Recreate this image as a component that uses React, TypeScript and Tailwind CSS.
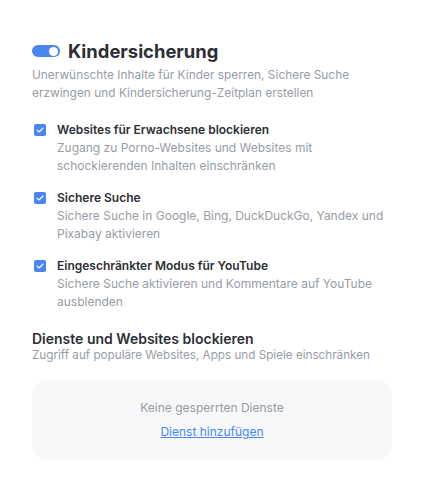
import React from 'react';

// ─── Data ─────────────────────────────────────────────────────
const OPTIONS = [
  {
    title: 'Websites für Erwachsene blockieren',
    text: 'Zugang zu Porno-Websites und Websites mit schockierenden Inhalten einschränken',
  },
  {
    title: 'Sichere Suche',
    text: 'Sichere Suche in Google, Bing, DuckDuckGo, Yandex und Pixabay aktivieren',
  },
  {
    title: 'Eingeschränkter Modus für YouTube',
    text: 'Sichere Suche aktivieren und Kommentare auf YouTube ausblenden',
  },
];

function Checkbox() {
  return (
    <span className="mt-[3px] ml-[2px] flex h-3 w-3 flex-shrink-0 items-center justify-center rounded-[2px] bg-[#4a86f3]">
      <svg width="8" height="6" viewBox="0 0 8 6" fill="none">
        <path d="M1 3.1 3 5 7 1" stroke="#fff" strokeWidth="1.1" strokeLinecap="round" strokeLinejoin="round" />
      </svg>
    </span>
  );
}

export default function App() {
  return (
    <div className="min-h-[493px] w-[426px] bg-white pt-[38px] pl-8 font-['Inter',sans-serif]">
      <div className="w-[360px]">
        {/* Header */}
        <div className="flex h-[26px] items-center gap-2">
          <span className="flex h-3 w-7 items-center justify-end rounded-full bg-[#4a86f3] px-[2px]">
            <span className="h-[9px] w-[9px] rounded-full bg-white" />
          </span>
          <h1 className="text-[18.4px] font-bold leading-[26px] text-[#2c2f35]">Kindersicherung</h1>
        </div>
        <p className="mt-[2px] text-[11.9px] leading-[18px] text-[#979ca5]">
          Unerwünschte Inhalte für Kinder sperren, Sichere Suche erzwingen und Kindersicherung-Zeitplan erstellen
        </p>

        {/* Options */}
        <div className="mt-[19px] flex flex-col gap-[14px]">
          {OPTIONS.map((o) => (
            <div key={o.title} className="flex items-start gap-[11px]">
              <Checkbox />
              <div className="w-[335px]">
                <div className="text-[12px] font-semibold leading-[18px] text-[#2c2f35]">{o.title}</div>
                <div className="text-[12px] leading-[18px] text-[#979ca5]">{o.text}</div>
              </div>
            </div>
          ))}
        </div>

        {/* Blocked services */}
        <h2 className="mt-5 text-[14px] font-semibold leading-[16px] text-[#2c2f35]">
          Dienste und Websites blockieren
        </h2>
        <p className="text-[11.7px] leading-[16px] text-[#979ca5]">
          Zugriff auf populäre Websites, Apps und Spiele einschränken
        </p>
        <div className="mt-[17px] flex flex-col items-center gap-[6px] rounded-2xl bg-[#f6f7f9] pt-[19px] pb-[19px]">
          <span className="text-[12px] leading-[18px] text-[#979ca5]">Keine gesperrten Dienste</span>
          <a href="#" className="text-[12px] leading-[18px] text-[#4a86f3] underline">
            Dienst hinzufügen
          </a>
        </div>
      </div>
    </div>
  );
}
